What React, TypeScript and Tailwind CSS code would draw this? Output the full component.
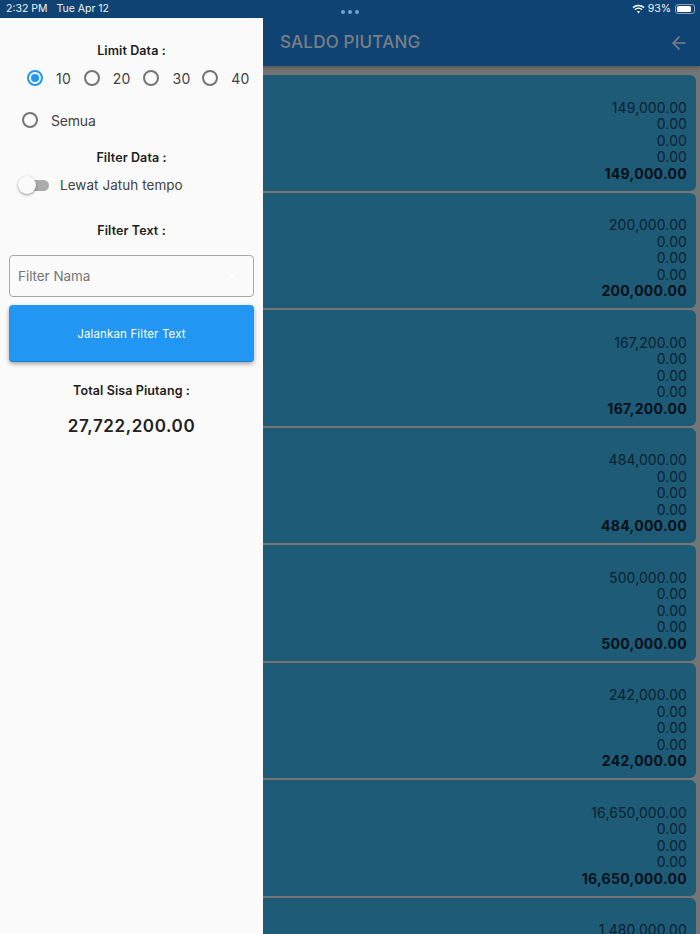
import { ArrowLeft, X } from 'lucide-react';

const rows = [
  '149,000.00',
  '200,000.00',
  '167,200.00',
  '484,000.00',
  '500,000.00',
  '242,000.00',
  '16,650,000.00',
  '1,480,000.00',
];

function Radio({ checked }: { checked?: boolean }) {
  return (
    <span
      className={`flex h-4 w-4 shrink-0 items-center justify-center rounded-full border-2 ${
        checked ? 'border-[#2196f3]' : 'border-[#757575]'
      }`}
    >
      {checked && <span className="h-2 w-2 rounded-full bg-[#2196f3]" />}
    </span>
  );
}

function Title({ children, className }: { children: string; className: string }) {
  return (
    <div className={`text-center text-[12.5px] leading-4 font-semibold tracking-[0.1px] text-[#212121] ${className}`}>
      {children}
    </div>
  );
}

function Drawer() {
  return (
    <aside className="absolute top-[18px] bottom-0 left-0 flex w-[263px] flex-col bg-[#fafafa] px-[9px]">
      <Title className="mt-[25px]">Limit Data :</Title>
      <div className="mt-[11px] flex h-4 items-center text-[14px] tracking-[0.3px] text-[#424242]">
        <span className="ml-[18px]"><Radio checked /></span>
        <span className="ml-[13px] w-[23px]">10</span>
        <span className="ml-[5px]"><Radio /></span>
        <span className="ml-[13px] w-[23px]">20</span>
        <span className="ml-[7px]"><Radio /></span>
        <span className="ml-[14px] w-[23px]">30</span>
        <span className="ml-[7px]"><Radio /></span>
        <span className="ml-[13px] w-[23px]">40</span>
      </div>
      <div className="mt-[26px] flex h-4 items-center text-[14px] text-[#424242]">
        <span className="ml-[13px]"><Radio /></span>
        <span className="ml-[13px] tracking-[-0.2px]">Semua</span>
      </div>
      <Title className="mt-[22px]">Filter Data :</Title>
      <div className="mt-[11px] flex h-4 items-center text-[13.5px] tracking-[0.05px] text-[#424242]">
        <span className="relative ml-[10px] h-[11px] w-[30px] rounded-full bg-[#ababab]">
          <span className="absolute top-[-3.5px] left-[-1px] h-[18px] w-[18px] rounded-full bg-[#fafafa] shadow-[0_1px_3px_rgba(0,0,0,0.4)]" />
        </span>
        <span className="ml-[11px]">Lewat Jatuh tempo</span>
      </div>
      <Title className="mt-[30px]">Filter Text :</Title>
      <div className="mt-[16px] flex h-[42px] items-center justify-between rounded-[4px] border border-[#a8a8a8] pr-[12px] pl-[8px] text-[13.5px] tracking-[-0.05px] text-[#757575]">
        <span>Filter Nama</span>
        <X size={18} strokeWidth={2} className="text-white" />
      </div>
      <button className="mt-[8px] h-[57px] rounded-[4px] border-b border-[#1c7fce] bg-[#2196f3] pt-[3px] text-[11.5px] tracking-[0.15px] text-white shadow-[0_2px_4px_rgba(0,0,0,0.35)]">
        Jalankan Filter Text
      </button>
      <Title className="mt-[21px]">Total Sisa Piutang :</Title>
      <div className="mt-[16px] text-center text-[17px] leading-[22px] font-semibold tracking-[0.6px] text-[#212121]">
        27,722,200.00
      </div>
    </aside>
  );
}

export default function App() {
  return (
    <div
      className="relative flex h-[934px] w-[700px] flex-col overflow-hidden bg-[#757575]"
      style={{ fontFamily: 'Inter, "Noto Sans", sans-serif' }}
    >
      <header className="relative h-[66px] shrink-0 bg-[#0f4373] shadow-[0_2px_4px_rgba(0,0,0,0.25)]">
        <div className="flex h-[18px] items-center justify-between pr-[5px] pl-[6px] text-[10.5px] text-[#f2f2f2]">
          <span className="flex gap-[9px]">
            <span>2:32 PM</span>
            <span>Tue Apr 12</span>
          </span>
          <span className="flex items-center gap-[3px]">
            <svg width="13" height="10" viewBox="0 0 13 10" fill="none" stroke="#fff">
              <path d="M1 3.6a8 8 0 0 1 11 0" strokeWidth="1.5" />
              <path d="M3 5.6a5.2 5.2 0 0 1 7 0" strokeWidth="1.5" />
              <path d="M6.5 9.5 4.9 7.6a2.4 2.4 0 0 1 3.2 0z" fill="#fff" stroke="none" />
            </svg>
            <span>93%</span>
            <span className="relative ml-[1px] h-[10px] w-[20px] rounded-[3px] border border-[#8aa2b8] p-[1px]">
              <span className="block h-full w-[90%] rounded-[1.5px] bg-white" />
            </span>
          </span>
        </div>
        <div className="absolute top-[9.5px] left-[341px] flex gap-[3px]">
          <span className="h-1 w-1 rounded-full bg-[#6fa3d6]" />
          <span className="h-1 w-1 rounded-full bg-[#6fa3d6]" />
          <span className="h-1 w-1 rounded-full bg-[#6fa3d6]" />
        </div>
        <div className="flex h-[48px] items-center justify-between pt-[1px] pr-[11px] pl-[280px] text-[#7a7f85]">
          <span className="text-[17px] font-medium tracking-[0.2px]">SALDO PIUTANG</span>
          <ArrowLeft size={20} strokeWidth={2} />
        </div>
      </header>
      <main className="flex flex-col gap-[2px] pt-[9px] pr-[4px]">
        {rows.map((value) => (
          <div
            key={value}
            className="flex h-[115.5px] shrink-0 flex-col items-end justify-end rounded-[6px] bg-[#1d5b77] pr-[9px] pb-[8.5px] text-[14px] leading-[16.4px] tracking-[0.1px] text-[#0c2230]"
          >
            <span>{value}</span>
            <span>0.00</span>
            <span>0.00</span>
            <span>0.00</span>
            <span className="font-bold tracking-[0.3px] text-[#06111a]">{value}</span>
          </div>
        ))}
      </main>
      <Drawer />
    </div>
  );
}
